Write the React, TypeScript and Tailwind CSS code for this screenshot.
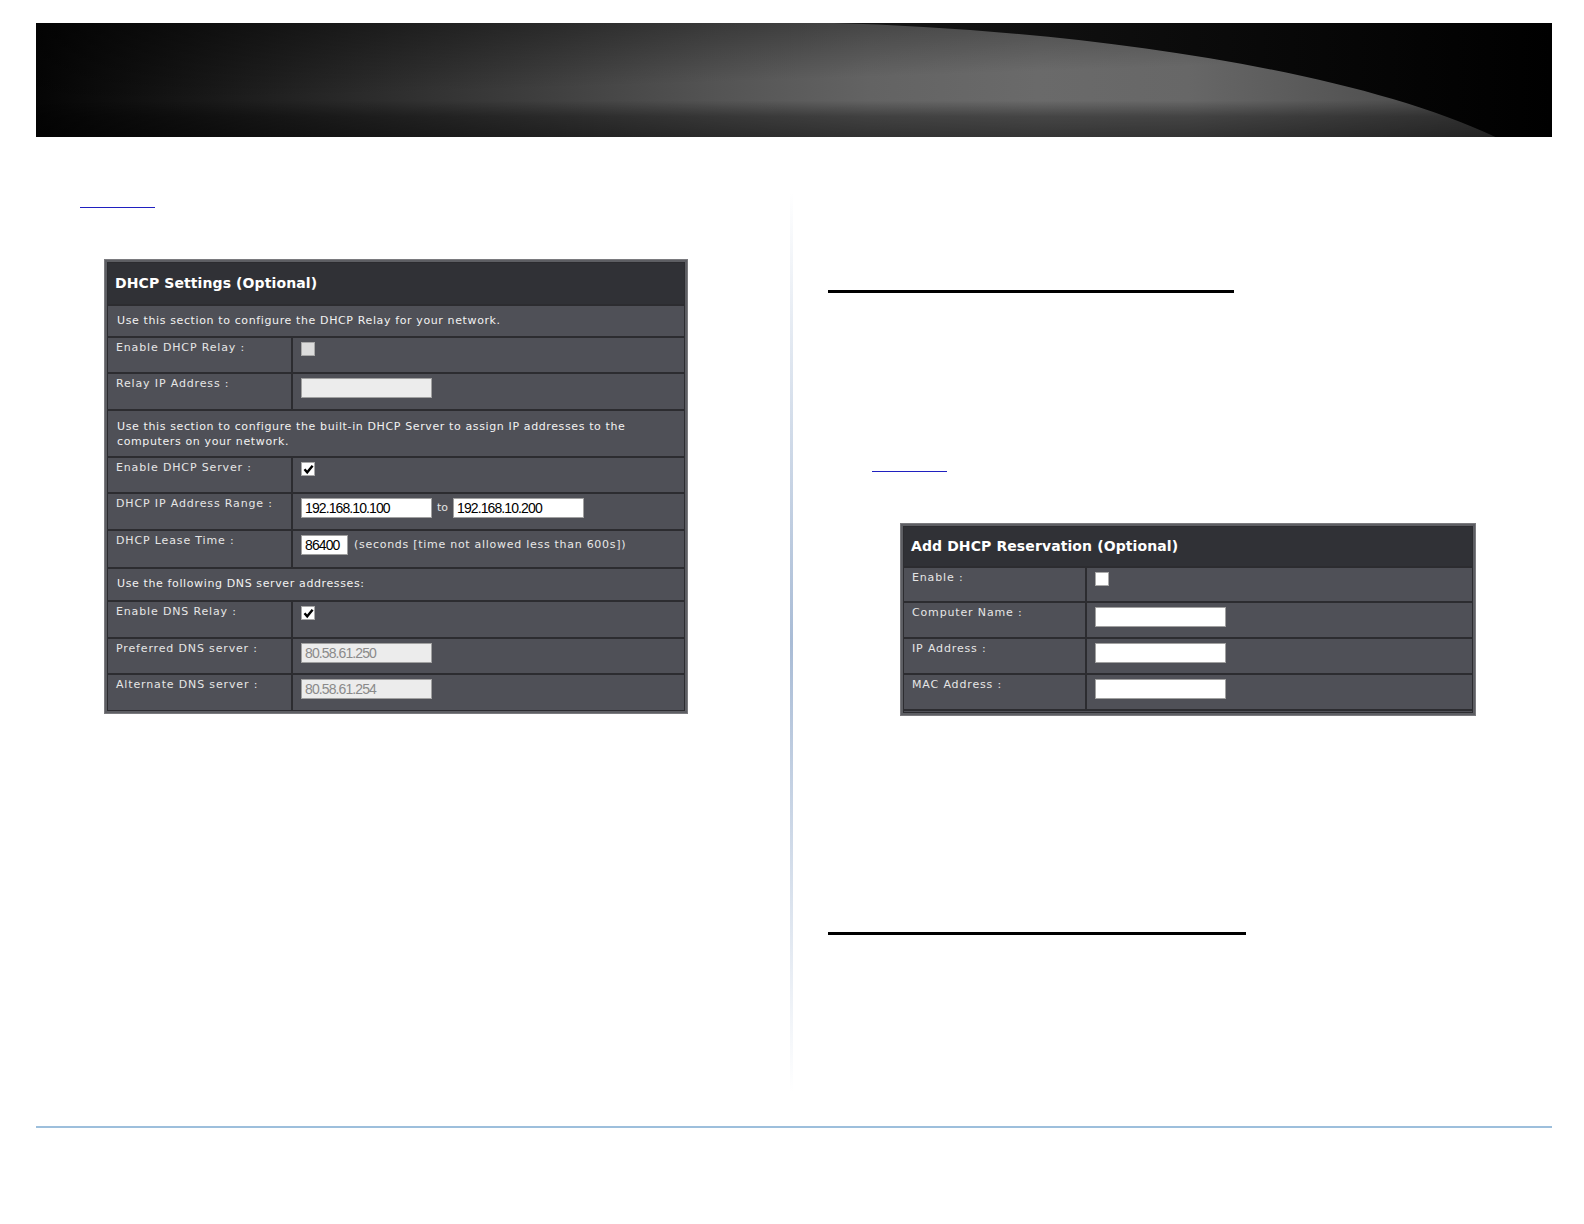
import React from "react";

const verdana = "font-['DejaVu_Sans',Verdana,sans-serif]";

function Check({ checked, light }: { checked?: boolean; light?: boolean }) {
  return (
    <span
      className={`inline-flex items-center justify-center w-[14px] h-[14px] border border-[#a8a8a8] ${
        light ? "bg-[#dcdcdc]" : "bg-white"
      }`}
    >
      {checked && (
        <svg width="11" height="11" viewBox="0 0 11 11">
          <path d="M1.5 5.3 L4.2 8.3 L9.6 1.8" fill="none" stroke="#000" strokeWidth="2.4" />
        </svg>
      )}
    </span>
  );
}

function Field({ value, w = 131, disabled }: { value?: string; w?: number; disabled?: boolean }) {
  return (
    <div
      className={`h-[20px] border border-[#a0a0a0] flex items-center pl-[3px] font-['Liberation_Sans',Arial,sans-serif] text-[14px] tracking-[-0.9px] leading-none ${
        disabled ? "bg-[#ececec] text-[#8a8a8a]" : "bg-white text-black"
      }`}
      style={{ width: w }}
    >
      {value}
    </div>
  );
}

function Row({
  label,
  children,
  h = 36,
  labelW = 185,
}: {
  label: string;
  children?: React.ReactNode;
  h?: number;
  labelW?: number;
}) {
  return (
    <div className="flex bg-[#4f5057] border-t-2 border-[#2c2c30]" style={{ height: h }}>
      <div
        className={`shrink-0 pl-[8px] pt-[3px] text-[11px] leading-[14px] tracking-[0.85px] text-[#e6e6e6] border-r-2 border-[#2c2c30] ${verdana}`}
        style={{ width: labelW }}
      >
        {label}
      </div>
      <div className="flex-1 pl-[8px] pt-[4px] flex items-start">{children}</div>
    </div>
  );
}

function Desc({ children, h, pt }: { children: React.ReactNode; h: number; pt: number }) {
  return (
    <div
      className={`bg-[#4f5057] border-t-2 border-[#2c2c30] pl-[9px] text-[11px] leading-[15px] tracking-[0.62px] text-[#f2f2f2] ${verdana}`}
      style={{ height: h, paddingTop: pt }}
    >
      {children}
    </div>
  );
}

function Panel({
  title,
  width,
  headerH = 41,
  children,
}: {
  title: string;
  width: number;
  headerH?: number;
  children: React.ReactNode;
}) {
  return (
    <div className="bg-[#5d5e63] border border-[#7a7a7e] p-[2px]" style={{ width }}>
      <div className="border border-[#2c2c30] bg-[#2c2c30]">
        <div
          className={`bg-[#303136] flex items-center pl-[7px] text-white font-bold text-[14px] tracking-[0.1px] ${verdana}`}
          style={{ height: headerH }}
        >
          {title}
        </div>
        {children}
      </div>
    </div>
  );
}

function Banner() {
  return (
    <svg viewBox="0 0 1501 113" preserveAspectRatio="none" className="block w-full h-full">
      <defs>
        <linearGradient id="hg" x1="0" x2="1" y1="0" y2="0">
          <stop offset="0" stopColor="#050505" />
          <stop offset="0.1" stopColor="#161616" />
          <stop offset="0.2" stopColor="#282828" />
          <stop offset="0.33" stopColor="#3e3e3e" />
          <stop offset="0.45" stopColor="#545454" />
          <stop offset="0.55" stopColor="#636363" />
          <stop offset="0.66" stopColor="#6a6a6a" />
          <stop offset="0.76" stopColor="#676767" />
          <stop offset="0.86" stopColor="#565656" />
          <stop offset="1" stopColor="#404040" />
        </linearGradient>
        <linearGradient id="vg" x1="0" x2="0" y1="0" y2="1">
          <stop offset="0" stopColor="#000" stopOpacity="0" />
          <stop offset="0.68" stopColor="#000" stopOpacity="0" />
          <stop offset="0.82" stopColor="#000" stopOpacity="0.35" />
          <stop offset="1" stopColor="#000" stopOpacity="0.5" />
        </linearGradient>
        <linearGradient id="dg" x1="0" y1="0" x2="0.45" y2="1">
          <stop offset="0" stopColor="#000" stopOpacity="0.45" />
          <stop offset="0.6" stopColor="#000" stopOpacity="0" />
        </linearGradient>
        <linearGradient id="rg" gradientUnits="userSpaceOnUse" x1="794" x2="1501" y1="0" y2="0">
          <stop offset="0" stopColor="#161616" />
          <stop offset="0.5" stopColor="#0b0b0b" />
          <stop offset="1" stopColor="#000000" />
        </linearGradient>
      </defs>
      <rect width="1501" height="113" fill="url(#hg)" />
      <rect width="1501" height="113" fill="url(#dg)" />
      <rect width="1501" height="113" fill="url(#vg)" />
      <path d="M790 0 C1005 6 1290 40 1445 113 L1501 113 L1501 0 Z" fill="url(#rg)" />
    </svg>
  );
}

export default function App() {
  return (
    <div className="w-full h-screen overflow-hidden bg-white flex flex-col">
      <div className="pt-[23px] pl-[36px]">
        <div className="h-[114px] w-[1516px]">
          <Banner />
        </div>
      </div>
      <div className="flex h-[989px] shrink-0">
        {/* left column */}
        <div className="w-[790px] shrink-0 flex flex-col">
          <div className="ml-[80px] mt-[70px] w-[75px] h-[1px] bg-[#2020c0]" />
          <div className="ml-[104px] mt-[51px]">
            <Panel title="DHCP Settings (Optional)" width={584}>
              <Desc h={32} pt={7}>Use this section to configure the DHCP Relay for your network.</Desc>
              <Row label="Enable DHCP Relay :">
                <Check light />
              </Row>
              <Row label="Relay IP Address :" h={37}>
                <Field disabled />
              </Row>
              <Desc h={47} pt={8}>
                Use this section to configure the built-in DHCP Server to assign IP addresses to the
                <br />
                computers on your network.
              </Desc>
              <Row label="Enable DHCP Server :">
                <Check checked />
              </Row>
              <Row label="DHCP IP Address Range :" h={37}>
                <div className="flex items-center">
                  <Field value="192.168.10.100" />
                  <span className={`mx-[5px] text-[11px] text-[#e4e4e4] ${verdana}`}>to</span>
                  <Field value="192.168.10.200" />
                </div>
              </Row>
              <Row label="DHCP Lease Time :" h={38}>
                <div className="flex items-center">
                  <Field value="86400" w={47} />
                  <span className={`ml-[6px] text-[11px] tracking-[0.72px] text-[#e8e8e8] ${verdana}`}>
                    (seconds [time not allowed less than 600s])
                  </span>
                </div>
              </Row>
              <Desc h={33} pt={7}>Use the following DNS server addresses:</Desc>
              <Row label="Enable DNS Relay :" h={37}>
                <Check checked />
              </Row>
              <Row label="Preferred DNS server :">
                <Field value="80.58.61.250" disabled />
              </Row>
              <Row label="Alternate DNS server :" h={37}>
                <Field value="80.58.61.254" disabled />
              </Row>
            </Panel>
          </div>
        </div>
        {/* divider */}
        <div className="w-[3px] shrink-0 mt-[55px] h-[900px] bg-gradient-to-b from-transparent via-[#a9bcd6] to-transparent" />
        {/* right column */}
        <div className="flex-1 flex flex-col">
          <div className="ml-[35px] mt-[153px] w-[406px] h-[3px] bg-black" />
          <div className="ml-[79px] mt-[178px] w-[75px] h-[1px] bg-[#2020c0]" />
          <div className="ml-[107px] mt-[51px]">
            <Panel title="Add DHCP Reservation (Optional)" width={576} headerH={39}>
              <Row label="Enable :" h={35} labelW={183}>
                <Check />
              </Row>
              <Row label="Computer Name :" labelW={183}>
                <Field />
              </Row>
              <Row label="IP Address :" h={36} labelW={183}>
                <Field />
              </Row>
              <Row label="MAC Address :" labelW={183}>
                <Field />
              </Row>
              <div className="h-[3px] bg-[#4f5057] border-t-2 border-[#2c2c30]" />
            </Panel>
          </div>
          <div className="ml-[35px] mt-[216px] w-[418px] h-[3px] bg-black" />
        </div>
      </div>
      <div className="ml-[36px] w-[1516px] h-[2px] shrink-0 bg-[#9dbfdc]" />
    </div>
  );
}
